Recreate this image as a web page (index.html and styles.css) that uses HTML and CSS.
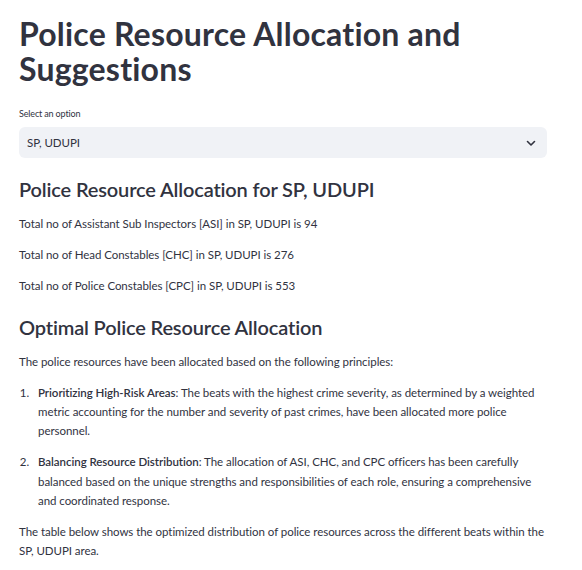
FILE: index.html
```html
<!DOCTYPE html>
<html lang="en">
<head>
<meta charset="utf-8">
<title>Police Resource Allocation and Suggestions</title>
<link rel="stylesheet" href="styles.css">
</head>
<body>
<main class="page">
  <h1 class="title">Police Resource Allocation and Suggestions</h1>

  <div class="field">
    <label class="field-label">Select an option</label>
    <div class="select">
      <span class="select-value">SP, UDUPI</span>
      <svg class="chevron" width="12" height="12" viewBox="0 0 12 12" aria-hidden="true">
        <path d="M2.5 4.5 L6 8 L9.5 4.5" fill="none" stroke="#31333f" stroke-width="1.6" stroke-linecap="round" stroke-linejoin="round"/>
      </svg>
    </div>
  </div>

  <h3 class="subheader">Police Resource Allocation for SP, UDUPI</h3>
  <p class="text">Total no of Assistant Sub Inspectors [ASI] in SP, UDUPI is 94</p>
  <p class="text">Total no of Head Constables [CHC] in SP, UDUPI is 276</p>
  <p class="text">Total no of Police Constables [CPC] in SP, UDUPI is 553</p>

  <h3 class="subheader">Optimal Police Resource Allocation</h3>
  <p class="text">The police resources have been allocated based on the following principles:</p>
  <ol class="list">
    <li><strong>Prioritizing High-Risk Areas</strong>: The beats with the highest crime severity, as determined by a weighted metric accounting for the number and severity of past crimes, have been allocated more police personnel.</li>
    <li><strong>Balancing Resource Distribution</strong>: The allocation of ASI, CHC, and CPC officers has been carefully balanced based on the unique strengths and responsibilities of each role, ensuring a comprehensive and coordinated response.</li>
  </ol>
  <p class="text">The table below shows the optimized distribution of police resources across the different beats within the SP, UDUPI area.</p>
</main>
</body>
</html>
```

FILE: styles.css
```css
html, body {
  margin: 0;
  padding: 0;
  background: #ffffff;
}

body {
  font-family: "Lato", "Noto Sans", sans-serif;
  color: #31333f;
  font-size: 11.5px;
  line-height: 19.2px;
  letter-spacing: -0.05px;
}

.page {
  width: 528px;
  padding: 16px 0 0 19px;
  display: flex;
  flex-direction: column;
}

.title {
  margin: 0;
  font-size: 32px;
  line-height: 35px;
  font-weight: 700;
  letter-spacing: 0.2px;
}

.field {
  margin-top: 21px;
  display: flex;
  flex-direction: column;
}

.field-label {
  font-size: 9px;
  line-height: 14px;
  letter-spacing: -0.15px;
  margin-bottom: 6px;
}

.select {
  height: 31px;
  background: #f0f2f6;
  border-radius: 6px;
  display: flex;
  align-items: center;
  justify-content: space-between;
  padding: 0 10px 0 8px;
}

.chevron {
  display: block;
}

.subheader {
  margin: 18px 0 0;
  font-size: 20px;
  line-height: 26px;
  font-weight: 600;
  letter-spacing: -0.15px;
}

.text {
  margin: 12px 0 0;
}

.list {
  margin: 12px 0 0;
  padding-left: 13px;
}

.list li {
  padding-left: 6px;
}

.list li + li {
  margin-top: 12px;
}

.list strong {
  font-weight: 600;
}

.list + .text {
  margin-top: 12px;
}
```
